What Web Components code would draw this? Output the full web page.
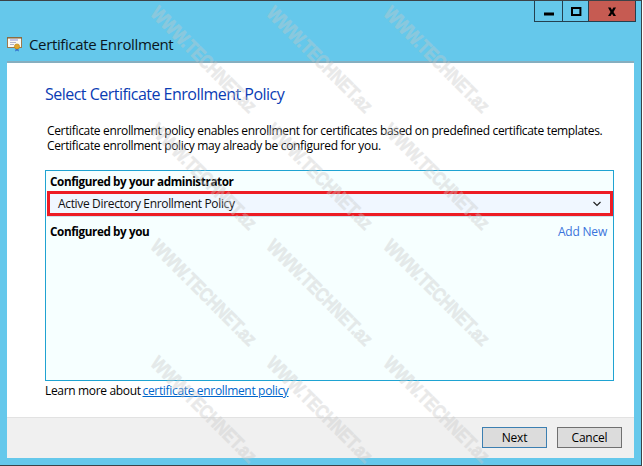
<!DOCTYPE html>
<html lang="en"><head><meta charset="utf-8"><title>Certificate Enrollment</title>
<style>
html,body{margin:0;padding:0;background:#fff;width:643px;height:466px;overflow:hidden}
body{font-family:"Open Sans","Noto Sans",sans-serif;font-size:12px;color:#000}
</style></head><body>
<cert-window>
  <caption-buttons slot="caption"></caption-buttons>
  <span slot="title">Certificate Enrollment</span>
  <wizard-page heading="Select Certificate Enrollment Policy">
    <p slot="intro">Certificate enrollment policy enables enrollment for certificates based on predefined certificate templates.<br>Certificate enrollment policy may already be configured for you.</p>
    <policy-panel slot="panel">
      <policy-label>Configured by your administrator</policy-label>
      <policy-combo>Active Directory Enrollment Policy</policy-combo>
      <policy-label action="Add New">Configured by you</policy-label>
    </policy-panel>
    <span slot="learn">Learn more about <a href="#" style="color:#0066cc;text-decoration:underline;margin-left:-1px">certificate enrollment policy</a></span>
    <wizard-button slot="buttons" accent>Next</wizard-button>
    <wizard-button slot="buttons">Cancel</wizard-button>
  </wizard-page>
  <water-marks slot="overlay"></water-marks>
</cert-window>
<script>
const def=(name,html)=>{customElements.define(name,class extends HTMLElement{
  constructor(){super();this.attachShadow({mode:'open'}).innerHTML=typeof html==='function'?html(this):html;}
});};

def('cert-window',`<style>
:host{display:flex;flex-direction:column;position:relative;box-sizing:border-box;width:642px;height:466px;background:#65c8eb;border-top:1px solid #3c4247;border-right:1px solid #3c4247;border-bottom:1px solid #3c4247;overflow:hidden}
header{display:flex;flex-direction:column;height:60px;flex:none}
.cap{display:flex;justify-content:flex-end;padding-right:5px}
.ttl{display:flex;align-items:center;gap:6px;padding-left:7px;margin-top:9px;height:26px;font-size:15px;color:#0a1620;letter-spacing:-.36px}
svg{display:block;flex:none}
main{flex:1;display:flex;margin:0 7px 7px;border-top:2px solid #86aebf;min-height:0}
.ov{position:absolute;inset:0;pointer-events:none}
</style>
<header><div class="cap"><slot name="caption"></slot></div>
<div class="ttl"><svg width="16" height="16" viewBox="0 0 16 16"><rect x="0.5" y="1.5" width="14" height="10" fill="#fdfaf2" stroke="#9c7a4e"/><path d="M0 2h15" stroke="#7d5c34"/><path d="M3 4h8" stroke="#8f8fd8"/><path d="M3 6.5h6M3 8.5h4" stroke="#b4b4c8"/><path d="M9 12l-1 3.5 2-1 2 1-1-3.5z" fill="#2f6fd0"/><circle cx="10" cy="10.5" r="2.6" fill="#e0a52a" stroke="#b67f16" stroke-width=".6"/></svg><slot name="title"></slot></div></header>
<main><slot></slot></main>
<div class="ov"><slot name="overlay"></slot></div>`);

def('caption-buttons',`<style>
:host{display:flex;height:21px;box-sizing:border-box;border:1px solid #24404f;border-top:0}
div{display:flex;align-items:center;justify-content:center;box-sizing:border-box;border-right:1px solid #24404f}
.a{width:28px}.b{width:26px}.c{width:46px;background:#c65b52;border:0}
svg{display:block}
</style>
<div class="a"><svg width="12" height="20" viewBox="0 0 12 20"><rect x="1" y="11.5" width="10" height="3"/></svg></div>
<div class="b"><svg width="12" height="20" viewBox="0 0 12 20"><rect x="2" y="7" width="8.4" height="7" fill="none" stroke="#000" stroke-width="2"/></svg></div>
<div class="c"><svg width="12" height="20" viewBox="0 0 12 20"><path d="M2 6.5h2.6L6 9l1.4-2.5H10L7.5 11 10 15H7.4L6 12.8 4.6 15H2l2.5-4z"/></svg></div>`);

def('wizard-page',el=>`<style>
:host{flex:1;display:flex;flex-direction:column;min-width:0;background:#fff}
.body{flex:1;padding:20px 20px 0 38px;min-height:0}
h1{margin:0;font-weight:400;font-size:16px;line-height:22px;color:#0a3cb4;letter-spacing:-.52px}
.intro{height:47px;padding:18px 0 0 2px;line-height:15px;letter-spacing:-.34px}
::slotted(p){margin:0}
.learn{margin-top:2px;line-height:16px;letter-spacing:-.33px}
footer{display:flex;justify-content:flex-end;gap:10px;height:41px;box-sizing:border-box;padding:9px 12px 0;background:#f0f0f0;border-top:1px solid #e2e2e2;flex:none}
</style>
<div class="body"><h1>${el.getAttribute('heading')}</h1>
<div class="intro"><slot name="intro"></slot></div>
<slot name="panel"></slot>
<div class="learn"><slot name="learn"></slot></div></div>
<footer><slot name="buttons"></slot></footer>`);

def('policy-panel',`<style>
:host{display:flex;flex-direction:column;box-sizing:border-box;height:211px;border:1px solid #1fa3d2;background:#f6ffff;padding:1px 0 0 1px}
</style><slot></slot>`);

def('policy-label',el=>`<style>
:host{display:flex;justify-content:space-between;align-items:center;height:18px;padding:0 6px 0 3px;font-weight:700;font-size:11.7px;letter-spacing:-.39px;color:#000}
:host(:last-child){margin-top:6px}
span{font-weight:400;font-size:12px;color:#3a74dc;letter-spacing:-.2px}
</style><div><slot></slot></div>${el.getAttribute('action')?`<span>${el.getAttribute('action')}</span>`:''}`);

def('policy-combo',`<style>
:host{display:flex;align-items:center;justify-content:space-between;box-sizing:border-box;height:25px;margin:1px 0 0 0;border:3px solid #ed1c24;background:#f0f7ff;box-shadow:0 1px 0 #cfe2ee;padding:0 9px 0 8px;letter-spacing:-.34px;color:#111}
svg{display:block}
</style><div><slot></slot></div><svg width="8" height="6" viewBox="0 0 8 6"><path d="M.5 1L4 4.500 7.500 1" fill="none" stroke="#222" stroke-width="1.200"/></svg>`);

def('wizard-button',`<style>
:host{display:flex;align-items:center;justify-content:center;box-sizing:border-box;width:65px;height:21px;background:#dcdcdc;border:1px solid #707070;color:#000;letter-spacing:-.2px}
:host([accent]){border-color:#3c7fb1}
</style><slot></slot>`);

def('water-marks',`<style>
:host{display:grid;grid-template-columns:repeat(3,116.5px);grid-template-rows:repeat(4,116.7px);position:absolute;left:145px;top:0}
span{display:flex;align-items:center;justify-content:center;width:116.5px;height:116.7px;white-space:nowrap;font:700 19.5px "Liberation Sans",sans-serif;color:#c8c8c8;opacity:.38}
b{display:block;font-weight:700;transform:rotate(45deg) scaleX(.82);letter-spacing:-.3px;-webkit-text-stroke:.7px #c8c8c8}
</style>`+Array(12).fill('<span><b>WWW.TECHNET.az</b></span>').join(''));
</script>
</body></html>
